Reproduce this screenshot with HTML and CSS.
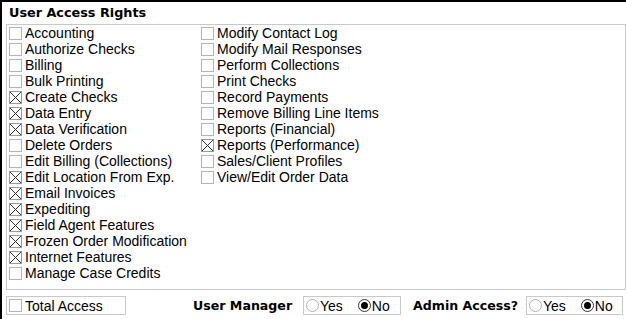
FILE: index.html
```html
<!DOCTYPE html>
<html>
<head>
<meta charset="utf-8">
<link rel="stylesheet" href="styles.css">
</head>
<body>
<div class="panel">
  <div class="title">User Access Rights</div>
  <div class="list">
    <div class="col col1">
      <div class="row"><span class="cb"></span>Accounting</div>
      <div class="row"><span class="cb"></span>Authorize Checks</div>
      <div class="row"><span class="cb"></span>Billing</div>
      <div class="row"><span class="cb"></span>Bulk Printing</div>
      <div class="row"><span class="cb on"></span>Create Checks</div>
      <div class="row"><span class="cb on"></span>Data Entry</div>
      <div class="row"><span class="cb on"></span>Data Verification</div>
      <div class="row"><span class="cb"></span>Delete Orders</div>
      <div class="row"><span class="cb"></span>Edit Billing (Collections)</div>
      <div class="row"><span class="cb on"></span>Edit Location From Exp.</div>
      <div class="row"><span class="cb on"></span>Email Invoices</div>
      <div class="row"><span class="cb on"></span>Expediting</div>
      <div class="row"><span class="cb on"></span>Field Agent Features</div>
      <div class="row"><span class="cb on"></span>Frozen Order Modification</div>
      <div class="row"><span class="cb on"></span>Internet Features</div>
      <div class="row"><span class="cb"></span>Manage Case Credits</div>
    </div>
    <div class="col col2">
      <div class="row"><span class="cb"></span>Modify Contact Log</div>
      <div class="row"><span class="cb"></span>Modify Mail Responses</div>
      <div class="row"><span class="cb"></span>Perform Collections</div>
      <div class="row"><span class="cb"></span>Print Checks</div>
      <div class="row"><span class="cb"></span>Record Payments</div>
      <div class="row"><span class="cb"></span>Remove Billing Line Items</div>
      <div class="row"><span class="cb"></span>Reports (Financial)</div>
      <div class="row"><span class="cb on"></span>Reports (Performance)</div>
      <div class="row"><span class="cb"></span>Sales/Client Profiles</div>
      <div class="row"><span class="cb"></span>View/Edit Order Data</div>
    </div>
  </div>
  <div class="bottom">
    <div class="box total"><span class="cb"></span>Total Access</div>
    <div class="label lbl-um">User Manager</div>
    <div class="box radios r-um">
      <span class="rd"></span><span class="rtext">Yes</span>
      <span class="rd sel"></span><span class="rtext">No</span>
    </div>
    <div class="label lbl-aa">Admin Access?</div>
    <div class="box radios r-aa">
      <span class="rd"></span><span class="rtext">Yes</span>
      <span class="rd sel"></span><span class="rtext">No</span>
    </div>
  </div>
</div>
</body>
</html>
```

FILE: styles.css
```css
html, body {
  margin: 0;
  padding: 0;
  background: #fff;
}
body {
  font-family: "Liberation Sans", Arial, sans-serif;
  font-size: 14px;
  color: #000;
}
.panel {
  width: 640px;
  height: 330px;
  border-top: 2px solid #000;
  border-left: 2px solid #000;
  padding-left: 4px;
  box-sizing: border-box;
}
.title {
  font-family: "DejaVu Sans", Verdana, sans-serif;
  font-weight: bold;
  font-size: 12.8px;
  height: 22px;
  line-height: 22px;
  padding-left: 3px;
}
.list {
  width: 620px;
  height: 266px;
  box-sizing: border-box;
  border: 1px solid #c9c9c9;
  padding: 0 2px 0 2px;
  display: flex;
}
.col1 {
  width: 192px;
}
.row {
  height: 16px;
  display: flex;
  align-items: center;
  white-space: nowrap;
}
.cb {
  width: 13px;
  height: 13px;
  box-sizing: border-box;
  border: 1px solid #b4b4b4;
  background: #fff;
  margin-right: 3px;
  flex: none;
}
.cb.on {
  border-color: #9a9a9a;
  background:
    linear-gradient(to top right, transparent calc(50% - 0.6px), #333 50%, transparent calc(50% + 0.6px)),
    linear-gradient(to bottom right, transparent calc(50% - 0.6px), #333 50%, transparent calc(50% + 0.6px)),
    #fff;
}
.bottom {
  display: flex;
  align-items: center;
  margin-top: 6px;
}
.box {
  height: 19px;
  box-sizing: border-box;
  border: 1px solid #c9c9c9;
  display: flex;
  align-items: center;
  padding-left: 2px;
  white-space: nowrap;
}
.total {
  width: 120px;
}
.label {
  font-family: "DejaVu Sans", Verdana, sans-serif;
  font-weight: bold;
  font-size: 12.6px;
  white-space: nowrap;
}
.lbl-um {
  margin-left: 67px;
  width: 110px;
}
.lbl-aa {
  margin-left: 12px;
  width: 113px;
}
.r-um {
  width: 98px;
}
.r-aa {
  width: 97px;
}
.rd {
  width: 13px;
  height: 13px;
  box-sizing: border-box;
  border-radius: 50%;
  border: 1px solid #b0b0b0;
  background: #fff;
  flex: none;
  margin-right: 1px;
  position: relative;
}
.rd.sel {
  border-color: #333;
}
.rd.sel::after {
  content: "";
  position: absolute;
  left: 2px;
  top: 2px;
  width: 7px;
  height: 7px;
  border-radius: 50%;
  background: #000;
}
.rtext {
  margin-right: 15px;
}
```
